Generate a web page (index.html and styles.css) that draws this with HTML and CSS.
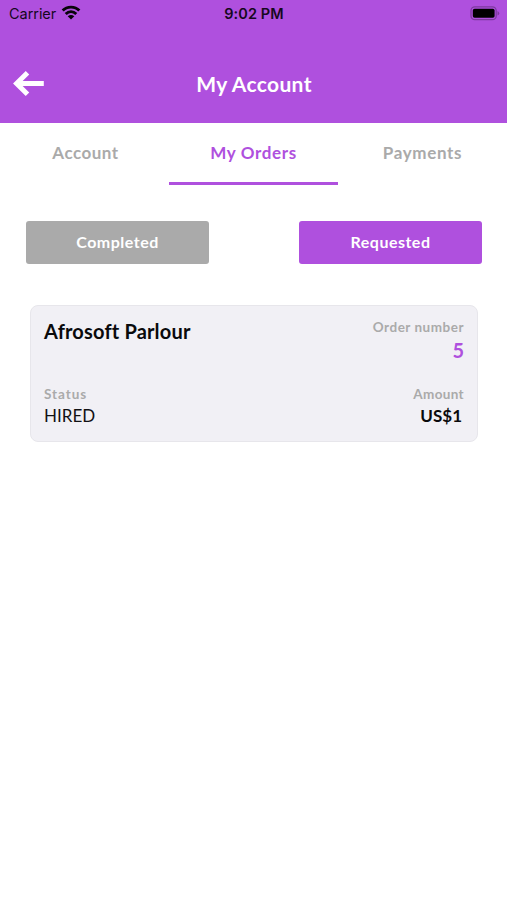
FILE: index.html
```html
<!DOCTYPE html>
<html lang="en">
<head>
<meta charset="utf-8">
<title>My Account</title>
<link rel="stylesheet" href="styles.css">
</head>
<body>
<header class="header">
  <div class="status-bar">
    <div class="carrier"><span>Carrier</span>
      <svg class="wifi" viewBox="0 0 20 15" width="20" height="15"><g fill="none" stroke="#08040a" stroke-width="2.9"><path d="M1.7 5.6C6 1 14 1 18.3 5.6"/><path d="M4.7 9C7.8 6 12.2 6 15.3 9"/></g><path fill="#08040a" d="M6.7 11.3q3.3-2.6 6.6 0L10 14.6z"/></svg>
    </div>
    <time class="clock">9:02 PM</time>
    <svg class="battery" viewBox="0 0 30 15" width="30" height="15"><rect x="1" y=".9" width="25.2" height="12.8" rx="3.8" fill="none" stroke="#7d3a9f" stroke-width="1.3"/><rect x="2.8" y="2.8" width="21.8" height="9" rx="1.8" fill="#000"/><path d="M27.5 5v4.6q1.7-.7 1.7-2.3T27.5 5z" fill="#7d3a9f"/></svg>
  </div>
  <div class="nav">
    <button class="back" aria-label="Back"><svg viewBox="0 0 32 28" width="32" height="28"><path d="M14.5 2.8 3.6 13.5 14.5 24.2M3.6 13.5H30.8" fill="none" stroke="#fff" stroke-width="5"/></svg></button>
    <h1 class="title">My Account</h1>
  </div>
</header>
<nav class="tabs">
  <a class="tab account">Account</a>
  <a class="tab active orders">My Orders</a>
  <a class="tab payments">Payments</a>
</nav>
<main>
  <div class="filters">
    <button class="filter">Completed</button>
    <button class="filter selected">Requested</button>
  </div>
  <article class="card">
    <div class="row top">
      <h2 class="shop">Afrosoft Parlour</h2>
      <div class="field right"><span class="label order">Order number</span><span class="number">5</span></div>
    </div>
    <div class="row">
      <div class="field"><span class="label status">Status</span><span class="state">HIRED</span></div>
      <div class="field right"><span class="label">Amount</span><span class="amount">US$1</span></div>
    </div>
  </article>
</main>
</body>
</html>
```
FILE: styles.css
```css
* { box-sizing: border-box; }
body { margin: 0; min-height: 900px; background: #fff; font-family: Lato, "Liberation Sans", sans-serif; }
h1, h2 { margin: 0; }
button { border: 0; padding: 0; font-family: inherit; }
svg { display: block; }
.header { height: 123px; background: #af50de; }
.status-bar { height: 27px; display: grid; grid-template-columns: 1fr auto 1fr; align-items: center; padding: 0 7px 0 9px; font-family: Inter, sans-serif; color: #16081d; }
.carrier { display: flex; align-items: center; gap: 5px; font-size: 14.5px; letter-spacing: -.05px; }
.wifi { margin-top: -2px; }
.clock { font-size: 14.5px; font-weight: 600; letter-spacing: .1px; margin-right: 1px; }
.battery { justify-self: end; }
.nav { height: 96px; display: grid; grid-template-columns: 1fr auto 1fr; align-items: center; padding: 17px 13px 0; }
.back { width: 32px; height: 28px; background: none; }
.title { font-size: 21px; line-height: 26px; color: #fff; letter-spacing: .35px; margin-left: 1px; }
.tabs { height: 62px; display: grid; grid-template-columns: repeat(3, 1fr); }
.tab { display: flex; justify-content: center; padding-top: 19px; font-size: 17px; line-height: 21px; font-weight: 700; color: #aaa; letter-spacing: .5px; border-bottom: 3px solid transparent; }
.tab.account { padding-left: 2px; }
.tab.active { color: #af50de; border-color: #af50de; letter-spacing: .65px; }
.tab.payments { letter-spacing: .65px; }
.filters { display: flex; justify-content: space-between; padding: 36px 25px 0 26px; }
.filter { width: 183px; height: 43px; padding-bottom: 2px; border-radius: 3px; background: #aaa; color: #fff; font-size: 16px; font-weight: 700; letter-spacing: .5px; }
.filter.selected { background: #af50de; }
.card { margin: 41px 29px 0 30px; height: 137px; padding: 13px 13px 0; background: #f1f0f5; border: 1px solid #e7e6eb; border-radius: 8px; }
.row { display: flex; justify-content: space-between; }
.row.top { height: 67px; }
.shop { font-size: 20px; line-height: 24px; color: #0a0a0c; letter-spacing: .18px; }
.field { display: flex; flex-direction: column; }
.right { align-items: flex-end; }
.label { font-size: 13.5px; line-height: 17px; font-weight: 700; color: #aaa; letter-spacing: .35px; }
.label.order { letter-spacing: .52px; }
.label.status { letter-spacing: .95px; }
.number { font-size: 20px; line-height: 28px; font-weight: 700; color: #af50de; }
.state { font-size: 17px; line-height: 26px; color: #111114; }
.amount { margin-right: 2px; font-size: 17px; line-height: 26px; font-weight: 700; color: #0a0a0c; }
```
